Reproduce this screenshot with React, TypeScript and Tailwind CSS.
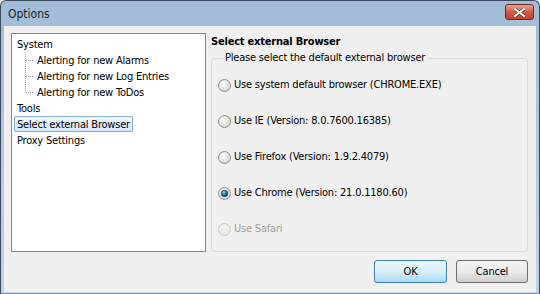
import React from 'react'

const font = { fontFamily: '"DejaVu Sans Condensed", "DejaVu Sans", sans-serif' }

function Radio({ checked, disabled }: { checked?: boolean; disabled?: boolean }) {
  const id = checked ? 'c' : disabled ? 'd' : 'n'
  return (
    <svg width="13" height="13" viewBox="0 0 13 13" className="shrink-0">
      <defs>
        <radialGradient id={`rf${id}`} cx="0.4" cy="0.35" r="0.7">
          <stop offset="0" stopColor={disabled ? '#f4f4f4' : '#ffffff'} />
          <stop offset="1" stopColor={disabled ? '#e6e6e6' : '#d2d2d2'} />
        </radialGradient>
        <radialGradient id="rdot" cx="0.4" cy="0.35" r="0.7">
          <stop offset="0" stopColor="#8fd4f7" />
          <stop offset="0.5" stopColor="#1b6ea8" />
          <stop offset="1" stopColor="#0b3a66" />
        </radialGradient>
      </defs>
      <circle cx="6.5" cy="6.5" r="6" fill={`url(#rf${id})`} stroke={disabled ? '#c8c8c8' : '#8e8f8f'} strokeWidth="1" />
      {checked && <circle cx="6.5" cy="6.5" r="3.3" fill="url(#rdot)" stroke="#1c4a78" strokeWidth="0.6" />}
    </svg>
  )
}

function TreeLine({ last }: { last?: boolean }) {
  return (
    <svg width="9" height="16" viewBox="0 0 9 16" className="shrink-0">
      <line x1="0.5" y1="0" x2="0.5" y2={last ? 8.5 : 16} stroke="#a0a0a0" strokeDasharray="1 1" />
      <line x1="1" y1="8.5" x2="9" y2="8.5" stroke="#a0a0a0" strokeDasharray="1 1" />
    </svg>
  )
}

function TreeItem({ label, selected }: { label: string; selected?: boolean }) {
  return (
    <div className="h-4 flex items-center">
      <span
        className={
          selected
            ? 'h-4 leading-[15px] px-[2px] border border-[#84acdd] rounded-[2px] bg-gradient-to-b from-[#f2f8fe] to-[#d5e7fc] whitespace-nowrap'
            : 'h-4 leading-[15px] px-[2px] border border-transparent whitespace-nowrap'
        }
      >
        {label}
      </span>
    </div>
  )
}

const alerts = ['Alerting for new Alarms', 'Alerting for new Log Entries', 'Alerting for new ToDos']

const browsers = [
  { label: 'Use system default browser (CHROME.EXE)' },
  { label: 'Use IE (Version: 8.0.7600.16385)' },
  { label: 'Use Firefox (Version: 1.9.2.4079)' },
  { label: 'Use Chrome (Version: 21.0.1180.60)', checked: true },
  { label: 'Use Safari', disabled: true },
]

export default function App() {
  return (
    <div
      className="w-[540px] h-[294px] flex flex-col border border-[#3b4a5c] border-b-[#4aa8d6] rounded-t-[6px] bg-gradient-to-b from-[#a2bcd8] to-[#bed3ea] text-[11px] tracking-[-0.2px] text-black overflow-hidden"
      style={font}
    >
      <div className="h-[25px] shrink-0 flex items-center justify-between pl-[7px] pr-[5px]">
        <span className="text-[12px] tracking-normal text-[#1b1b1b] pt-[1px]">Options</span>
        <div className="w-[29px] h-[16px] rounded-[3px] border border-[#6e2a20] bg-gradient-to-b from-[#e3a596] via-[#cf5b45] to-[#c2412b] flex items-center justify-center -mt-[3px]">
          <svg width="11" height="9" viewBox="0 0 11 9">
            <path d="M1 1 L10 8 M10 1 L1 8" stroke="#4a1a12" strokeWidth="3" strokeLinecap="square" />
            <path d="M1 1 L10 8 M10 1 L1 8" stroke="#ffffff" strokeWidth="2" strokeLinecap="square" />
          </svg>
        </div>
      </div>

      <div className="flex-1 mx-[3px] mb-[1px] bg-[#f0f0f0] flex flex-col pt-[7px] pl-[7px] pr-[8px]">
        <div className="flex h-[219px]">
          <div className="w-[195px] h-full bg-white border border-[#828790] pt-[2px] pl-[2px]">
            <TreeItem label="System" />
            <div className="pl-[11px]">
              {alerts.map((a, i) => (
                <div key={a} className="h-4 flex items-center">
                  <TreeLine last={i === alerts.length - 1} />
                  <span className="pl-[3px] whitespace-nowrap leading-[17px]">{a}</span>
                </div>
              ))}
            </div>
            <TreeItem label="Tools" />
            <TreeItem label="Select external Browser" selected />
            <TreeItem label="Proxy Settings" />
          </div>

          <div className="flex-1 ml-[5px] flex flex-col">
            <div className="h-[18px] pt-[1px] leading-[16px] font-bold">Select external Browser</div>
            <fieldset className="flex-1 m-0 border border-[#d5dfe5] rounded-[3px] pl-[6px] pr-2 pt-[2px] pb-0 min-w-0">
              <legend className="ml-[5px] px-[2px] leading-[14px]">Please select the default external browser</legend>
              {browsers.map(b => (
                <div key={b.label} className="h-9 flex items-center gap-[3px]">
                  <Radio checked={b.checked} disabled={b.disabled} />
                  <span className={b.disabled ? 'text-[#a0a0a0] whitespace-nowrap pt-[1px]' : 'whitespace-nowrap pt-[1px]'}>{b.label}</span>
                </div>
              ))}
            </fieldset>
          </div>
        </div>

        <div className="flex justify-end gap-[9px] mt-[8px]">
          <button className="w-[73px] h-[23px] rounded-[3px] border border-[#3c7fb1] bg-gradient-to-b from-[#eaf6fd] via-[#d9f0fc] to-[#a7d9f5] leading-none">
            OK
          </button>
          <button className="w-[72px] h-[23px] rounded-[3px] border border-[#707070] bg-gradient-to-b from-[#f2f2f2] via-[#ebebeb] to-[#cfcfcf] leading-none">
            Cancel
          </button>
        </div>
      </div>
    </div>
  )
}
